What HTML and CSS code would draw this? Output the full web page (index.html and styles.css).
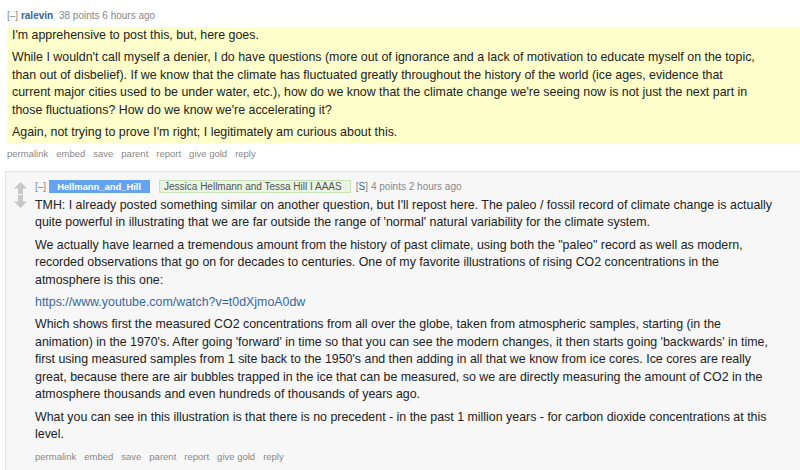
FILE: index.html
```html
<!DOCTYPE html>
<html>
<head>
<meta charset="utf-8">
<link rel="stylesheet" href="styles.css">
</head>
<body>
<div class="comment top">
  <p class="tagline"><span class="expand">[–]</span> <a class="author">ralevin</a> <span class="score">38 points</span> <span class="time">6 hours ago</span></p>
  <div class="md yellow">
    <p>I'm apprehensive to post this, but, here goes.</p>
    <p>While I wouldn't call myself a denier, I do have questions (more out of ignorance and a lack of motivation to educate myself on the topic, than out of disbelief). If we know that the climate has fluctuated greatly throughout the history of the world (ice ages, evidence that current major cities used to be under water, etc.), how do we know that the climate change we're seeing now is not just the next part in those fluctuations? How do we know we're accelerating it?</p>
    <p>Again, not trying to prove I'm right; I legitimately am curious about this.</p>
  </div>
  <ul class="buttons">
    <li>permalink</li><li>embed</li><li>save</li><li>parent</li><li>report</li><li>give gold</li><li>reply</li>
  </ul>
</div>
<div class="child">
  <div class="midcol">
    <svg class="arrow" width="13" height="12" viewBox="0 0 13 12"><path d="M6.5 0 L13 6.5 L9 6.5 L9 12 L4 12 L4 6.5 L0 6.5 Z" fill="#c8c8c8"/></svg>
    <svg class="arrow" width="13" height="13" viewBox="0 0 13 13"><path d="M6.5 13 L13 6.5 L9 6.5 L9 0 L4 0 L4 6.5 L0 6.5 Z" fill="#c8c8c8"/></svg>
  </div>
  <div class="entry">
    <p class="tagline"><span class="expand">[–]</span><a class="author submitter">Hellmann_and_Hill</a><span class="flair">Jessica Hellmann and Tessa Hill I AAAS</span><span class="s">[<a>S</a>]</span><span class="score">4 points 2 hours ago</span></p>
    <div class="md">
      <p>TMH: I already posted something similar on another question, but I'll repost here. The paleo / fossil record of climate change is actually quite powerful in illustrating that we are far outside the range of 'normal' natural variability for the climate system.</p>
      <p>We actually have learned a tremendous amount from the history of past climate, using both the "paleo" record as well as modern, recorded observations that go on for decades to centuries. One of my favorite illustrations of rising CO2 concentrations in the atmosphere is this one:</p>
      <p><a class="link">https://www.youtube.com/watch?v=t0dXjmoA0dw</a></p>
      <p>Which shows first the measured CO2 concentrations from all over the globe, taken from atmospheric samples, starting (in the animation) in the 1970's. After going 'forward' in time so that you can see the modern changes, it then starts going 'backwards' in time, first using measured samples from 1 site back to the 1950's and then adding in all that we know from ice cores. Ice cores are really great, because there are air bubbles trapped in the ice that can be measured, so we are directly measuring the amount of CO2 in the atmosphere thousands and even hundreds of thousands of years ago.</p>
      <p>What you can see in this illustration is that there is no precedent - in the past 1 million years - for carbon dioxide concentrations at this level.</p>
    </div>
    <ul class="buttons">
      <li>permalink</li><li>embed</li><li>save</li><li>parent</li><li>report</li><li>give gold</li><li>reply</li>
    </ul>
  </div>
</div>
</body>
</html>
```

FILE: styles.css
```css
html, body {
  margin: 0;
  padding: 0;
  background: #ffffff;
  font-family: "Liberation Sans", Arial, sans-serif;
  color: #222222;
  overflow: hidden;
}
.comment.top {
  padding: 9px 0 0 7px;
}
.tagline {
  margin: 0;
  font-size: 10px;
  line-height: 14px;
  color: #888888;
}
.tagline .expand {
  color: #888888;
}
.author {
  color: #336699;
  font-weight: bold;
  margin-right: 3px;
}
.md {
  font-size: 12.4px;
  line-height: 17.6px;
}
.md p {
  margin: 0 0 4.6px 0;
}
.md p:last-child {
  margin-bottom: 0;
}
.yellow {
  background: #ffffcc;
  margin-top: 4px;
  padding: 0 45px 1px 5px;
}
.buttons {
  list-style: none;
  margin: 0;
  padding: 4px 0 0 0;
  display: flex;
  gap: 8px;
  font-size: 9.5px;
  line-height: 14px;
  color: #888888;
}
.child {
  margin: 10px 0 0 5px;
  background: #f7f7f7;
  border-top: 1px solid #e3e3e3;
  border-left: 1px solid #e3e3e3;
  display: flex;
  padding-bottom: 7px;
}
.midcol {
  width: 29px;
  flex: none;
  display: flex;
  flex-direction: column;
  align-items: center;
  padding-top: 10px;
  gap: 1px;
}
.arrow {
  display: block;
}
.entry {
  flex: 1;
  padding-top: 8px;
  padding-right: 20px;
}
.entry .tagline {
  display: flex;
  align-items: center;
  line-height: 13px;
}
.entry .tagline .expand {
  margin-right: 3px;
}
.submitter {
  background: #64a3ef;
  color: #ffffff;
  padding: 0 9px 0 8px;
  margin-right: 9px;
  font-size: 9.4px;
  line-height: 13px;
}
.flair {
  background: #eaf5e3;
  border: 1px solid #c9e3b9;
  color: #545454;
  padding: 0 8px 0 4px;
  line-height: 11px;
  margin-right: 5px;
}
.s {
  color: #888888;
  margin-right: 3px;
}
.s a {
  color: #336699;
}
.entry .md {
  margin-top: 4px;
}
.link {
  color: #3369a6;
}
.entry .buttons {
  padding-top: 6px;
}
```
